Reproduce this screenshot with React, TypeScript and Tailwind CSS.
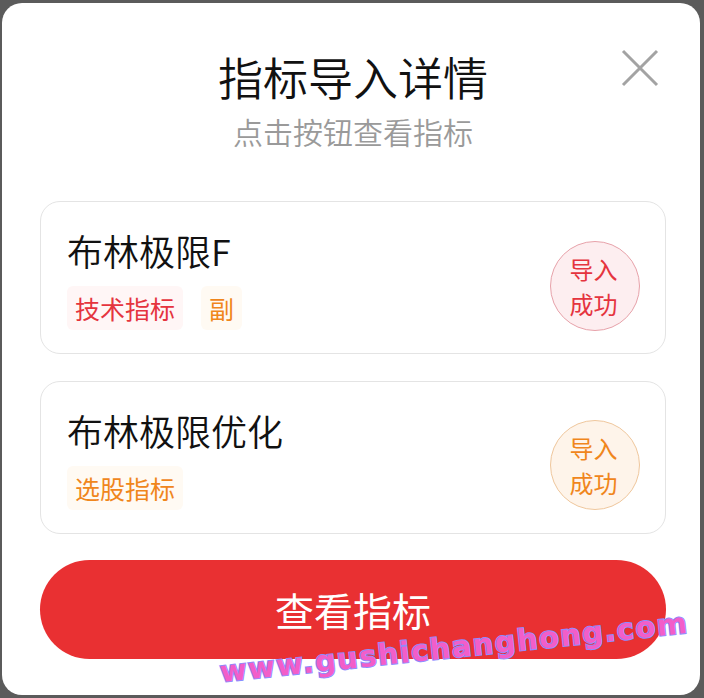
import React from "react";

type Item = {
  name: string;
  tags: { label: string; tone: "red" | "orange" }[];
  tone: "red" | "orange";
};

const items: Item[] = [
  {
    name: "布林极限F",
    tags: [
      { label: "技术指标", tone: "red" },
      { label: "副", tone: "orange" },
    ],
    tone: "red",
  },
  {
    name: "布林极限优化",
    tags: [{ label: "选股指标", tone: "orange" }],
    tone: "orange",
  },
];

function Tag({ label, tone }: { label: string; tone: "red" | "orange" }) {
  return (
    <span
      className={
        tone === "red"
          ? "h-[44px] px-2 flex items-center rounded-md bg-[#fff6f6] text-[#e5343e] text-[25px] leading-none"
          : "h-[44px] px-2 flex items-center rounded-md bg-[#fffaf3] text-[#f0861c] text-[25px] leading-none"
      }
    >
      {label}
    </span>
  );
}

function Badge({ tone }: { tone: "red" | "orange" }) {
  return (
    <div
      className={
        tone === "red"
          ? "mt-[39px] w-[90px] h-[90px] shrink-0 rounded-full border border-[#e7a2aa] bg-[#fdeef0] text-[#e5343e] flex flex-col items-center justify-center text-[24px] leading-[35px] pr-[3px]"
          : "mt-[38px] w-[90px] h-[90px] shrink-0 rounded-full border border-[#efc79d] bg-[#fef4ea] text-[#f0861c] flex flex-col items-center justify-center text-[24px] leading-[35px] pr-[3px]"
      }
    >
      <span>导入</span>
      <span>成功</span>
    </div>
  );
}

function Card({ item }: { item: Item }) {
  return (
    <div className="h-[153px] rounded-[20px] border border-[#e4e4e4] bg-white flex justify-between pl-[26px] pr-[25px]">
      <div className="pt-[30px] flex flex-col gap-[18px]">
        <div className="text-[36px] leading-[36px] text-[#111] font-[350]">{item.name}</div>
        <div className="flex gap-[18px]">
          {item.tags.map((t) => (
            <Tag key={t.label} label={t.label} tone={t.tone} />
          ))}
        </div>
      </div>
      <Badge tone={item.tone} />
    </div>
  );
}

export default function App() {
  return (
    <div
      className="w-[704px] h-[698px] bg-[#5b5b5b] pt-[3px] pl-[2px] pr-[4px] relative overflow-hidden"
      style={{ fontFamily: '"Noto Sans CJK SC", "Noto Sans", sans-serif' }}
    >
      <div className="h-[692px] bg-white rounded-[20px] relative pt-[52px] pl-[38px] pr-[34px]">
        <button className="absolute right-[38px] top-[43px] w-[44px] h-[44px] flex items-center justify-center">
          <svg width="40" height="40" viewBox="0 0 40 40" fill="none">
            <path d="M3 3L37 37M37 3L3 37" stroke="#a3a3a3" strokeWidth="3" />
          </svg>
        </button>
        <div className="flex flex-col items-center">
          <h1 className="text-[45px] leading-[44px] text-[#111] font-[350]">指标导入详情</h1>
          <p className="mt-[17px] text-[30px] leading-[30px] text-[#9a9a9a] font-[350]">点击按钮查看指标</p>
        </div>
        <div className="mt-[55px] flex flex-col gap-[27px]">
          {items.map((it) => (
            <Card key={it.name} item={it} />
          ))}
        </div>
        <button className="mt-[26px] w-full h-[99px] rounded-full bg-[#e93032] text-white text-[39px] leading-none flex items-center justify-center">
          查看指标
        </button>
      </div>
      <div
        className="absolute left-[220px] top-[651px] origin-left -rotate-6 text-[29px] font-bold tracking-[1.5px] text-[#f25ec9] whitespace-nowrap [-webkit-text-stroke:2px_#8d8cff] [paint-order:stroke_fill]"
        style={{ fontFamily: '"DejaVu Sans", sans-serif' }}
      >
        www.gushichanghong.com
      </div>
    </div>
  );
}
